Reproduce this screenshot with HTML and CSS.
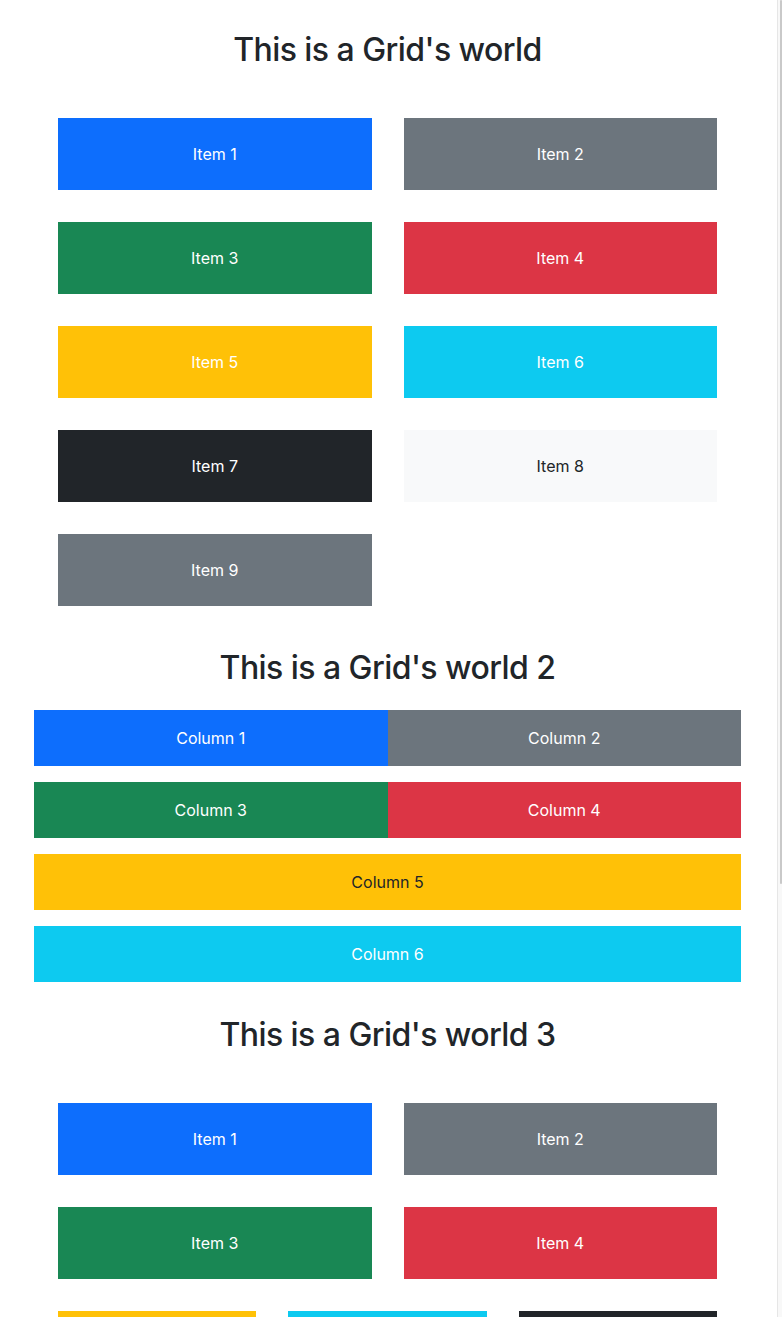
FILE: index.html
```html
<!DOCTYPE html>
<html lang="en">
<head>
<meta charset="utf-8">
<title>Grid's world</title>
<link rel="stylesheet" href="styles.css">
</head>
<body>
<div class="page">
  <main class="main">
    <section class="section">
      <h1 class="title t1">This is a Grid's world</h1>
      <div class="grid-a">
        <div class="cell bg-primary">Item 1</div>
        <div class="cell bg-secondary">Item 2</div>
        <div class="cell bg-success">Item 3</div>
        <div class="cell bg-danger">Item 4</div>
        <div class="cell bg-warning">Item 5</div>
        <div class="cell bg-info">Item 6</div>
        <div class="cell bg-dark">Item 7</div>
        <div class="cell bg-light">Item 8</div>
        <div class="cell bg-secondary">Item 9</div>
      </div>
    </section>
    <section class="section">
      <h1 class="title t2">This is a Grid's world 2</h1>
      <div class="grid-b">
        <div class="col bg-primary">Column 1</div>
        <div class="col bg-secondary">Column 2</div>
        <div class="col bg-success">Column 3</div>
        <div class="col bg-danger">Column 4</div>
        <div class="col wide bg-warning dark-text">Column 5</div>
        <div class="col wide bg-info">Column 6</div>
      </div>
    </section>
    <section class="section">
      <h1 class="title t3">This is a Grid's world 3</h1>
      <div class="stack">
        <div class="row-2">
          <div class="cell bg-primary">Item 1</div>
          <div class="cell bg-secondary">Item 2</div>
        </div>
        <div class="row-2">
          <div class="cell bg-success">Item 3</div>
          <div class="cell bg-danger">Item 4</div>
        </div>
        <div class="row-3">
          <div class="cell bg-warning">Item 5</div>
          <div class="cell bg-info">Item 6</div>
          <div class="cell bg-dark">Item 7</div>
        </div>
      </div>
    </section>
  </main>
  <div class="rail"><div class="thumb"></div></div>
</div>
</body>
</html>
```
FILE: styles.css
```css
html {
  overflow: hidden;
}
body {
  margin: 0;
  background: #ffffff;
  color: #212529;
  font-family: Inter, "Liberation Sans", Arial, sans-serif;
  font-size: 16px;
}
.page {
  display: flex;
  align-items: stretch;
  min-height: 1317px;
}
.main {
  width: 775px;
  flex: none;
}
.rail {
  width: 4px;
  margin-left: 2px;
  border-left: 1px solid #e6e6e6;
  background: #f8f8f8;
  flex: none;
  display: flex;
  justify-content: center;
}
.thumb {
  width: 2px;
  height: 884px;
  margin-left: 1px;
  background: #c9c9c9;
  border-radius: 1px;
}
.section {
  display: flex;
  flex-direction: column;
  align-items: center;
}
.title {
  margin: 0;
  font-size: 32px;
  font-weight: 500;
  line-height: 40px;
  letter-spacing: -0.55px;
  text-align: center;
  color: #212529;
}
.t1 { margin-top: 30px; margin-bottom: 48px; }
.t2 { margin-top: 42px; margin-bottom: 22px; }
.t3 { margin-top: 33px; margin-bottom: 48px; }

.grid-a {
  width: 659px;
  display: grid;
  grid-template-columns: 1fr 1fr;
  gap: 32px;
}
.stack {
  width: 659px;
  display: flex;
  flex-direction: column;
  gap: 32px;
}
.row-2 {
  display: grid;
  grid-template-columns: 1fr 1fr;
  gap: 32px;
}
.row-3 {
  display: grid;
  grid-template-columns: 1fr 1fr 1fr;
  gap: 32px;
}

.cell {
  height: 72px;
  display: flex;
  align-items: center;
  justify-content: center;
  color: #ffffff;
  font-size: 16px;
}
.grid-b {
  width: 707px;
  display: grid;
  grid-template-columns: 1fr 1fr;
  column-gap: 0;
  row-gap: 16px;
}
.col {
  height: 56px;
  display: flex;
  align-items: center;
  justify-content: center;
  color: #ffffff;
  font-size: 16px;
}
.wide { grid-column: span 2; }

.bg-primary { background: #0d6efd; }
.bg-secondary { background: #6c757d; }
.bg-success { background: #198754; }
.bg-danger { background: #dc3545; }
.bg-warning { background: #ffc107; }
.bg-info { background: #0dcaf0; }
.bg-dark { background: #212529; }
.bg-light { background: #f8f9fa; color: #212529; }
.dark-text { color: #212529; }
```
